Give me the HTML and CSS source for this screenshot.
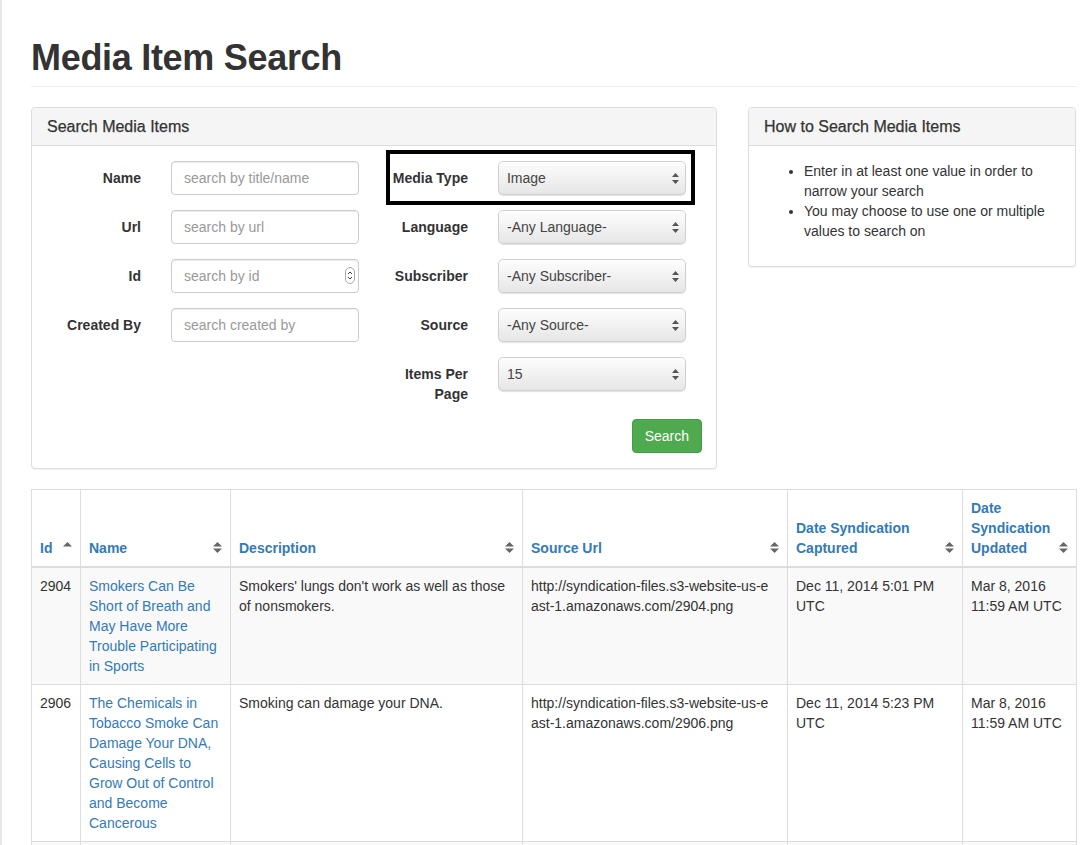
FILE: index.html
```html
<!DOCTYPE html>
<html lang="en">
<head>
<meta charset="utf-8">
<title>Media Item Search</title>
<link rel="stylesheet" href="styles.css">
</head>
<body>
<div class="page">
  <h1 class="page-title">Media Item Search</h1>

  <div class="panels">
    <section class="panel panel-search">
      <div class="panel-heading">Search Media Items</div>
      <div class="panel-body">
        <div class="form-cols">
          <div class="form-col">
            <div class="form-group">
              <label class="ctl-label">Name</label>
              <div class="ctl"><input class="form-control" type="text" placeholder="search by title/name"></div>
            </div>
            <div class="form-group">
              <label class="ctl-label">Url</label>
              <div class="ctl"><input class="form-control" type="text" placeholder="search by url"></div>
            </div>
            <div class="form-group">
              <label class="ctl-label">Id</label>
              <div class="ctl">
                <div class="num-wrap">
                  <input class="form-control" type="text" placeholder="search by id">
                  <svg class="spinner" width="10" height="17" viewBox="0 0 10 17"><rect x="0.5" y="0.5" width="9" height="16" rx="4.5" fill="#fff" stroke="#a9a9a9"/><path d="M3 7 L5 5 L7 7" fill="none" stroke="#444" stroke-width="1"/><path d="M3 10 L5 12 L7 10" fill="none" stroke="#444" stroke-width="1"/></svg>
                </div>
              </div>
            </div>
            <div class="form-group">
              <label class="ctl-label">Created By</label>
              <div class="ctl"><input class="form-control" type="text" placeholder="search created by"></div>
            </div>
          </div>
          <div class="form-col">
            <div class="form-group highlighted">
              <label class="ctl-label">Media Type</label>
              <div class="ctl"><div class="select-wrap"><select class="form-select"><option>Image</option></select><svg class="sel-arrow" width="7" height="11" viewBox="0 0 7 11"><path d="M3.5 0 L7 4 L0 4 Z" fill="#555"/><path d="M3.5 11 L7 7 L0 7 Z" fill="#555"/></svg></div></div>
            </div>
            <div class="form-group">
              <label class="ctl-label">Language</label>
              <div class="ctl"><div class="select-wrap"><select class="form-select"><option>-Any Language-</option></select><svg class="sel-arrow" width="7" height="11" viewBox="0 0 7 11"><path d="M3.5 0 L7 4 L0 4 Z" fill="#555"/><path d="M3.5 11 L7 7 L0 7 Z" fill="#555"/></svg></div></div>
            </div>
            <div class="form-group">
              <label class="ctl-label">Subscriber</label>
              <div class="ctl"><div class="select-wrap"><select class="form-select"><option>-Any Subscriber-</option></select><svg class="sel-arrow" width="7" height="11" viewBox="0 0 7 11"><path d="M3.5 0 L7 4 L0 4 Z" fill="#555"/><path d="M3.5 11 L7 7 L0 7 Z" fill="#555"/></svg></div></div>
            </div>
            <div class="form-group">
              <label class="ctl-label">Source</label>
              <div class="ctl"><div class="select-wrap"><select class="form-select"><option>-Any Source-</option></select><svg class="sel-arrow" width="7" height="11" viewBox="0 0 7 11"><path d="M3.5 0 L7 4 L0 4 Z" fill="#555"/><path d="M3.5 11 L7 7 L0 7 Z" fill="#555"/></svg></div></div>
            </div>
            <div class="form-group">
              <label class="ctl-label">Items Per Page</label>
              <div class="ctl"><div class="select-wrap"><select class="form-select"><option>15</option></select><svg class="sel-arrow" width="7" height="11" viewBox="0 0 7 11"><path d="M3.5 0 L7 4 L0 4 Z" fill="#555"/><path d="M3.5 11 L7 7 L0 7 Z" fill="#555"/></svg></div></div>
            </div>
          </div>
        </div>
        <div class="btn-row"><button class="btn-success" type="button">Search</button></div>
      </div>
    </section>

    <section class="panel panel-help">
      <div class="panel-heading">How to Search Media Items</div>
      <div class="panel-body">
        <ul class="help-list">
          <li>Enter in at least one value in order to narrow your search</li>
          <li>You may choose to use one or multiple values to search on</li>
        </ul>
      </div>
    </section>
  </div>

  <table class="results">
    <colgroup>
      <col class="c-id"><col class="c-name"><col class="c-desc"><col class="c-url"><col class="c-cap"><col class="c-upd">
    </colgroup>
    <thead>
      <tr>
        <th><a>Id</a><svg class="sort" width="9" height="11" viewBox="0 0 9 11"><path d="M4.5 0 L9 4.5 L0 4.5 Z" fill="#666"/></svg></th>
        <th><a>Name</a><svg class="sort" width="9" height="11" viewBox="0 0 9 11"><path d="M4.5 0 L9 4.5 L0 4.5 Z" fill="#666"/><path d="M4.5 11 L9 6.5 L0 6.5 Z" fill="#666"/></svg></th>
        <th><a>Description</a><svg class="sort" width="9" height="11" viewBox="0 0 9 11"><path d="M4.5 0 L9 4.5 L0 4.5 Z" fill="#666"/><path d="M4.5 11 L9 6.5 L0 6.5 Z" fill="#666"/></svg></th>
        <th><a>Source Url</a><svg class="sort" width="9" height="11" viewBox="0 0 9 11"><path d="M4.5 0 L9 4.5 L0 4.5 Z" fill="#666"/><path d="M4.5 11 L9 6.5 L0 6.5 Z" fill="#666"/></svg></th>
        <th><a>Date Syndication Captured</a><svg class="sort" width="9" height="11" viewBox="0 0 9 11"><path d="M4.5 0 L9 4.5 L0 4.5 Z" fill="#666"/><path d="M4.5 11 L9 6.5 L0 6.5 Z" fill="#666"/></svg></th>
        <th><a>Date Syndication Updated</a><svg class="sort" width="9" height="11" viewBox="0 0 9 11"><path d="M4.5 0 L9 4.5 L0 4.5 Z" fill="#666"/><path d="M4.5 11 L9 6.5 L0 6.5 Z" fill="#666"/></svg></th>
      </tr>
    </thead>
    <tbody>
      <tr>
        <td>2904</td>
        <td><a>Smokers Can Be Short of Breath and May Have More Trouble Participating in Sports</a></td>
        <td>Smokers' lungs don't work as well as those of nonsmokers.</td>
        <td class="url">http://syndication-files.s3-website-us-east-1.amazonaws.com/2904.png</td>
        <td>Dec 11, 2014 5:01 PM UTC</td>
        <td>Mar 8, 2016 11:59 AM UTC</td>
      </tr>
      <tr>
        <td>2906</td>
        <td><a>The Chemicals in Tobacco Smoke Can Damage Your DNA, Causing Cells to Grow Out of Control and Become Cancerous</a></td>
        <td>Smoking can damage your DNA.</td>
        <td class="url">http://syndication-files.s3-website-us-east-1.amazonaws.com/2906.png</td>
        <td>Dec 11, 2014 5:23 PM UTC</td>
        <td>Mar 8, 2016 11:59 AM UTC</td>
      </tr>
      <tr class="next-row">
        <td></td><td></td><td></td><td></td><td></td><td></td>
      </tr>
    </tbody>
  </table>
</div>
</body>
</html>
```

FILE: styles.css
```css
* { box-sizing: border-box; }

html, body {
  margin: 0;
  padding: 0;
}

body {
  font-family: "Liberation Sans", Arial, Helvetica, sans-serif;
  font-size: 14px;
  line-height: 20px;
  color: #333;
  background: #fff;
  border-left: 2px solid #e8e8e8;
  min-height: 845px;
}

.page {
  width: 1075px;
  padding: 38px 0 0 29px;
}

.page-title {
  margin: 0 0 20px;
  width: 1046px;
  font-size: 36px;
  line-height: 40px;
  font-weight: bold;
  letter-spacing: -0.3px;
  color: #333;
  padding-bottom: 8px;
  border-bottom: 1px solid #eee;
}

.panels {
  display: flex;
  gap: 31px;
  width: 1045px;
  align-items: flex-start;
  margin-bottom: 20px;
}

.panel {
  border: 1px solid #ddd;
  border-radius: 4px;
  background: #fff;
  box-shadow: 0 1px 1px rgba(0, 0, 0, 0.05);
}

.panel-search { width: 686px; }
.panel-help { width: 328px; }

.panel-heading {
  background: #f5f5f5;
  border-bottom: 1px solid #ddd;
  border-radius: 3px 3px 0 0;
  padding: 10px 15px;
  font-size: 16px;
  line-height: 17px;
  color: #333;
  -webkit-text-stroke: 0.25px #333;
}

.panel-body {
  padding: 15px;
}

.form-cols {
  display: grid;
  grid-template-columns: 1fr 1fr;
}

.form-group {
  display: grid;
  grid-template-columns: 33.333% 66.667%;
  margin-bottom: 15px;
  position: relative;
}

.ctl-label {
  text-align: right;
  font-weight: bold;
  padding: 7px 15px 0 0;
  line-height: 20px;
}

.ctl {
  padding: 0 15px;
}

.form-control {
  display: block;
  width: 100%;
  height: 34px;
  padding: 6px 12px;
  font-family: inherit;
  font-size: 14px;
  line-height: 20px;
  color: #555;
  background: #fff;
  border: 1px solid #ccc;
  border-radius: 4px;
  box-shadow: inset 0 1px 1px rgba(0, 0, 0, 0.075);
  outline: none;
}

.form-control::placeholder { color: #999; }

.num-wrap { position: relative; }

.spinner {
  position: absolute;
  right: 4px;
  top: 8px;
}

.select-wrap { position: relative; }

.form-select {
  -webkit-appearance: none;
  appearance: none;
  display: block;
  width: 100%;
  height: 34px;
  padding: 6px 8px;
  font-family: inherit;
  font-size: 14px;
  line-height: 20px;
  color: #444;
  background: linear-gradient(#fdfdfd, #f3f3f3 45%, #e6e6e6);
  border: 1px solid #d0d0d0;
  border-radius: 5px;
  box-shadow: 0 1px 1px rgba(0, 0, 0, 0.12), inset 0 1px 0 #fff;
  outline: none;
}

.sel-arrow {
  position: absolute;
  right: 7px;
  top: 12px;
  pointer-events: none;
}

.highlighted::after {
  content: "";
  position: absolute;
  left: 12px;
  right: 6px;
  top: -11px;
  bottom: -10px;
  border: 4px solid #000;
  pointer-events: none;
}

.btn-row {
  display: flex;
  justify-content: flex-end;
  margin-right: -1px;
}

.btn-success {
  font-family: inherit;
  font-size: 14px;
  line-height: 20px;
  padding: 6px 12px;
  height: 34px;
  color: #fff;
  background: #4fa94f;
  border: 1px solid #449d44;
  border-radius: 4px;
}

.help-list {
  margin: 0 0 10px;
  padding-left: 40px;
}

/* table */
.results {
  width: 1045px;
  border-collapse: collapse;
  table-layout: fixed;
  border: 1px solid #ddd;
}

.c-id { width: 49px; }
.c-name { width: 150px; }
.c-desc { width: 292px; }
.c-url { width: 265px; }
.c-cap { width: 175px; }
.c-upd { width: 114px; }

.results th,
.results td {
  border: 1px solid #ddd;
  padding: 8px;
  line-height: 20px;
  text-align: left;
}

.results th {
  position: relative;
  vertical-align: bottom;
  border-bottom: 2px solid #ddd;
  padding-right: 30px;
  font-weight: bold;
}

.results th a,
.results td a {
  color: #337ab7;
  text-decoration: none;
}

.results .sort {
  position: absolute;
  right: 8px;
  bottom: 13px;
}

.results td { vertical-align: top; }

.results tbody tr:nth-child(odd) td { background: #f9f9f9; }

.results td.url {
  word-break: break-all;
  padding-right: 16px;
}

.results .next-row td { height: 60px; }
```
